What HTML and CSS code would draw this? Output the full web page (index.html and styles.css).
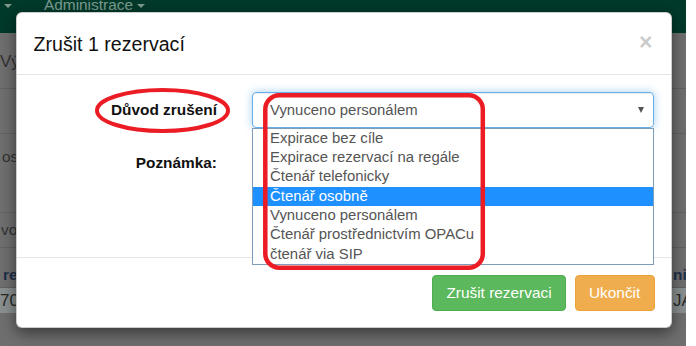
FILE: index.html
```html
<!DOCTYPE html>
<html lang="cs">
<head>
  <meta charset="UTF-8" />
  <title>Zrušit rezervaci</title>
  <link rel="stylesheet" href="styles.css">
</head>
<body>
  <div class="screen">
    <!-- stránka pod dialogem -->
    <div class="page">
      <nav class="navbar">
        <span class="caret nav-caret"></span>
        <span class="nav-item">Administrace <span class="caret"></span></span>
      </nav>
      <div class="row row-title">Výpůjčky a rezervace</div>
      <div class="row row-empty"></div>
      <div class="row row-tall">osoba</div>
      <div class="row row-small">vování</div>
      <div class="table">
        <div class="tr th"><span>rezervace</span><span>ni</span></div>
        <div class="tr td"><span>7012</span><span>JA</span></div>
      </div>
    </div>

    <div class="backdrop"></div>

    <!-- dialog -->
    <div class="modal">
      <div class="modal-header">
        <h4 class="modal-title">Zrušit 1 rezervací</h4>
        <button class="close">&times;</button>
      </div>
      <div class="modal-body">
        <div class="form-group">
          <label class="form-label">Důvod zrušení</label>
          <div class="field">
            <div class="select">
              <span>Vynuceno personálem</span>
              <span class="select-arrow"></span>
            </div>
            <ul class="select-list">
              <li>Expirace bez cíle</li>
              <li>Expirace rezervací na regále</li>
              <li>Čtenář telefonicky</li>
              <li class="hover">Čtenář osobně</li>
              <li>Vynuceno personálem</li>
              <li>Čtenář prostřednictvím OPACu</li>
              <li>čtenář via SIP</li>
            </ul>
          </div>
        </div>
        <div class="form-group">
          <label class="form-label">Poznámka:</label>
          <div class="field">
            <textarea class="textarea"></textarea>
          </div>
        </div>
      </div>
      <div class="modal-footer">
        <button class="btn btn-success">Zrušit rezervaci</button>
        <button class="btn btn-warning">Ukončit</button>
      </div>
    </div>

    <!-- červené značky -->
    <svg class="marks" width="686" height="346" viewBox="0 0 686 346">
      <ellipse cx="162.5" cy="110.5" rx="65.5" ry="20.5" fill="none" stroke="#ec1c24" stroke-width="4" />
      <rect x="265.3" y="95.3" width="217.5" height="172.5" rx="14" fill="none" stroke="#ec1c24" stroke-width="4.5" />
    </svg>
  </div>
</body>
</html>
```

FILE: styles.css
```css
* {
  margin: 0;
  padding: 0;
  box-sizing: border-box;
}
body {
  background-color: #ffffff;
  font-family: 'Liberation Sans', Arial, sans-serif;
  font-size: 15.4px;
  color: #333;
}
.screen {
  position: relative;
  width: 686px;
  height: 346px;
  overflow: hidden;
  background-color: #bababa;
}

/* stránka */
.navbar {
  height: 33px;
  background-color: #005f46;
  color: #d0ffea;
  display: flex;
  align-items: flex-start;
  gap: 32px;
  padding-left: 4px;
}
.nav-item {
  margin-top: -5px;
  line-height: 20px;
}
.caret {
  display: inline-block;
  width: 0;
  height: 0;
  border-left: 4.5px solid transparent;
  border-right: 4.5px solid transparent;
  border-top: 4.5px solid #d0ffea;
  vertical-align: middle;
}
.nav-caret {
  margin-top: 4px;
}
.row {
  border-bottom: 1px solid #a4a4a4;
  color: #555;
  display: flex;
  align-items: center;
  white-space: nowrap;
}
.row-title {
  height: 56px;
  font-size: 17px;
  padding-top: 3px;
}
.row-empty {
  height: 45px;
}
.row-tall {
  height: 79px;
  align-items: flex-start;
  padding-top: 14px;
  padding-left: 2px;
}
.row-small {
  height: 35px;
  padding-left: 1px;
}
.table {
  margin-top: 15px;
}
.tr {
  display: grid;
  grid-template-columns: 673px 1fr;
  height: 25px;
  align-items: center;
  white-space: nowrap;
  overflow: hidden;
}
.th {
  font-weight: bold;
  color: #344e7b;
  padding-left: 3px;
  border-bottom: 1px solid #a4a4a4;
}
.th span + span {
  margin-left: -3px;
}
.td {
  background-color: #e4f1ef;
  color: #444;
  font-size: 17px;
}

.backdrop {
  position: absolute;
  inset: 0;
  background-color: rgba(0, 0, 0, 0.4);
}

/* dialog */
.modal {
  position: absolute;
  left: 16px;
  top: 12px;
  width: 656px;
  z-index: 2;
  background-color: #fff;
  border: 1px solid rgba(0, 0, 0, 0.2);
  border-radius: 6px;
  box-shadow: 0 5px 15px rgba(0, 0, 0, 0.5);
}
.modal-header {
  display: flex;
  justify-content: space-between;
  align-items: flex-start;
  padding: 16.5px;
  border-bottom: 1px solid #e5e5e5;
}
.modal-title {
  font-size: 19.6px;
  font-weight: normal;
  line-height: 28.3px;
  color: #111;
}
.close {
  background: none;
  border: none;
  font-family: inherit;
  font-size: 23px;
  font-weight: bold;
  line-height: 1;
  color: #000;
  opacity: 0.2;
  margin-top: 1px;
  margin-right: 2px;
}
.modal-body {
  padding: 16.5px 17px;
}
.form-group {
  display: grid;
  grid-template-columns: 183px 1fr;
  column-gap: 35px;
  margin-bottom: 16.5px;
}
.form-label {
  text-align: right;
  font-weight: bold;
  color: #111;
  padding-top: 7.7px;
  line-height: 22px;
}
.field {
  position: relative;
}
.select {
  height: 36px;
  display: flex;
  justify-content: space-between;
  align-items: center;
  padding: 0 9px 0 17px;
  font-size: 14.9px;
  color: #555;
  border: 1px solid #66afe9;
  border-radius: 4px;
  box-shadow: inset 0 1px 1px rgba(0, 0, 0, 0.075), 0 0 8px rgba(102, 175, 233, 0.6);
}
.select-arrow {
  width: 0;
  height: 0;
  border-left: 3.5px solid transparent;
  border-right: 3.5px solid transparent;
  border-top: 6px solid #555;
}
.select-list {
  position: absolute;
  top: 100%;
  left: 0;
  right: 0;
  list-style: none;
  background-color: #fff;
  border: 1px solid #7f9db9;
  z-index: 2;
}
.select-list li {
  font-size: 14.9px;
  line-height: 19.3px;
  padding-left: 17px;
  color: #555;
  white-space: nowrap;
}
.select-list li.hover {
  background-color: #1e90ff;
  color: #fff;
}
.textarea {
  display: block;
  width: 100%;
  height: 80px;
  border: 1px solid #ccc;
  border-radius: 4px;
  resize: none;
}
.modal-footer {
  display: flex;
  justify-content: flex-end;
  gap: 9px;
  padding: 16.5px;
  border-top: 1px solid #e5e5e5;
}
.btn {
  height: 36px;
  padding: 0 13.2px;
  font-family: inherit;
  font-size: 15.4px;
  color: #fff;
  border: 1px solid transparent;
  border-radius: 4px;
}
.btn-success {
  background-color: #5cb85c;
  border-color: #4cae4c;
}
.btn-warning {
  background-color: #f0ad4e;
  border-color: #eea236;
}

.marks {
  position: absolute;
  left: 0;
  top: 0;
  z-index: 5;
  pointer-events: none;
}
```
